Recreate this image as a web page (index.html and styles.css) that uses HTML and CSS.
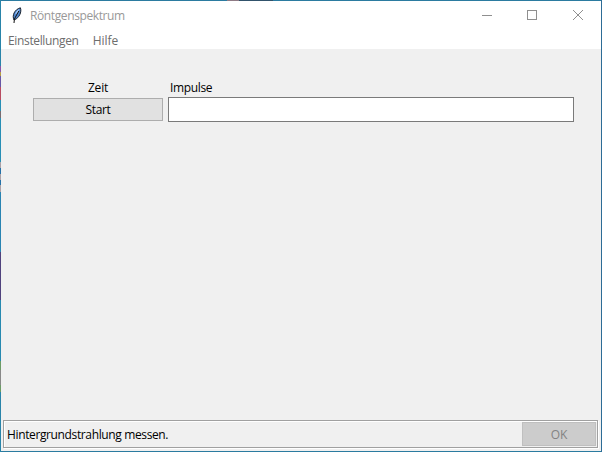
FILE: index.html
```html
<!DOCTYPE html>
<html lang="de">
<head>
<meta charset="utf-8">
<title>Röntgenspektrum</title>
<link rel="stylesheet" href="styles.css">
</head>
<body>
<div class="window">
  <header class="titlebar">
    <svg class="feather" width="12" height="18" viewBox="0 0 12 18">
      <path d="M3 14 C0.8 9.5 3.5 3.5 9.4 1.8 C11 6 8 12 3.8 13.6 Z" fill="#4d84cc" stroke="#17202c"/>
      <path d="M4 8.5 C4.6 6 6.5 3.7 8.5 3 L6.5 7 Z" fill="#a3c8f5"/>
      <path d="M3 17 L3.4 13 L7.8 5" fill="none" stroke="#111" stroke-width="1"/>
    </svg>
    <h1 class="title">Röntgenspektrum</h1>
    <svg class="controls" width="102" height="12" viewBox="0 0 102 12" fill="none" stroke="#8f8f8f" shape-rendering="crispEdges">
      <path d="M0 6.5H10M45.5 1.5H54.5V10.5H45.5Z"/>
      <path d="M91 1L101 11M101 1L91 11" shape-rendering="auto"/>
    </svg>
  </header>
  <nav class="menu"><span class="settings">Einstellungen</span><span class="help">Hilfe</span></nav>
  <main class="content">
    <div class="form">
      <label class="time">Zeit</label>
      <label class="pulses">Impulse</label>
      <button class="start"><span>Start</span></button>
      <input class="entry" type="text" aria-label="Impulse">
    </div>
  </main>
  <footer class="footer">
    <div class="status">
      <span class="message">Hintergrundstrahlung messen.</span>
      <button class="ok" disabled>OK</button>
    </div>
  </footer>
</div>
</body>
</html>
```
FILE: styles.css
```css
* { box-sizing: border-box; }
body {
  margin: 0;
  font: 12px/16px "Open Sans", "Noto Sans", sans-serif;
  color: #000;
}
.window {
  display: flex;
  flex-direction: column;
  width: 602px;
  height: 452px;
  padding: 1px;
  background:
    linear-gradient(90deg, transparent 227px, #8f7b85 227px 239px, #31526b 239px 273px, transparent 273px) 0 0 / 100% 1px no-repeat,
    linear-gradient(#2984a9 0 66px, #8755a8 66px 72px, #b59b45 72px 76px, #6756a5 76px 87px, #b84b60 87px 100px, #278eb5 100px 111px, #776b70 111px 118px, #278eb5 118px 162px, #aaa1a7 162px 168px, #2572a8 168px 174px, #aaa1a7 174px 180px, #2572a8 180px 185px, #aaa1a7 185px 192px, #2984b2 192px 252px, #50427d 252px 300px, #2789b0 300px 361px, #6c9b65 361px 370px, #888 370px 385px, #6c9b65 385px 392px, #2984a9 392px) 0 0 / 1px 100% no-repeat,
    linear-gradient(#2d6c96, #2d6c96) 100% 0 / 1px 100% no-repeat,
    #2b7ba0;
}
.titlebar {
  display: flex;
  align-items: flex-start;
  height: 30px;
  padding: 0 17px 0 10px;
  background: #fff;
}
.feather { margin-top: 5px; }
.title {
  margin: 7px auto 0 7px;
  font-size: 12px;
  font-weight: 400;
  letter-spacing: -.39px;
  color: #999;
}
.controls { margin-top: 8px; }
.menu {
  display: flex;
  gap: 14px;
  height: 18px;
  padding: 2px 7px 0;
  background: #fff;
  color: #6d6d6d;
}
.settings { letter-spacing: -.35px; }
.content { flex: 1; background: #f0f0f0; padding: 30px 27px 0 32px; }
.form {
  display: grid;
  grid-template-columns: 130px 406px;
  grid-template-rows: 18px 25px;
  column-gap: 5px;
}
.time, .pulses { padding-top: 1px; }
.time { text-align: center; letter-spacing: -.2px; }
.pulses { padding-left: 2px; letter-spacing: -.35px; }
button, input { font: inherit; color: inherit; border-radius: 0; }
.start {
  align-self: center;
  height: 23px;
  padding: 0;
  border: 1px solid #adadad;
  background: #e1e1e1;
  letter-spacing: -.3px;
}
.entry {
  width: 406px;
  height: 25px;
  padding: 2px;
  border: 1px solid #7a7a7a;
  background: #fff;
}
.footer { padding: 0 3px 3px 2px; background: #f0f0f0; }
.status {
  display: flex;
  align-items: center;
  justify-content: space-between;
  height: 28px;
  padding: 0 1px 0 3px;
  border: 1px solid #a0a0a0;
  box-shadow: inset 1px 1px #fff, 1px 1px #fff;
}
.message { padding-top: 2px; letter-spacing: -.37px; }
.ok {
  width: 74px;
  height: 24px;
  padding: 1px 0 0;
  border: 1px solid #bfbfbf;
  background: #ccc;
  color: #838383;
}
```
